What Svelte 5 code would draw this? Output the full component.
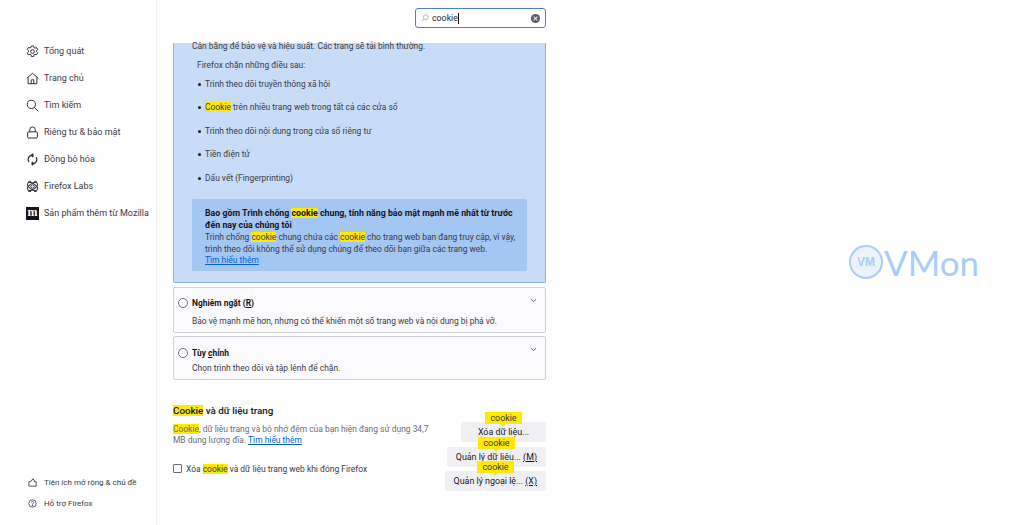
<script>
  const navItems = [
    { label: "Tổng quát", icon: "gear" },
    { label: "Trang chủ", icon: "home" },
    { label: "Tìm kiếm", icon: "search" },
    { label: "Riêng tư & bảo mật", icon: "lock" },
    { label: "Đồng bộ hóa", icon: "sync" },
    { label: "Firefox Labs", icon: "labs" },
    { label: "Sản phẩm thêm từ Mozilla", icon: "moz" }
  ];

  const blocked = [
    [null, "Trình theo dõi truyền thông xã hội"],
    ["Cookie", " trên nhiều trang web trong tất cả các cửa sổ"],
    [null, "Trình theo dõi nội dung trong cửa sổ riêng tư"],
    [null, "Tiền điện tử"],
    [null, "Dấu vết (Fingerprinting)"]
  ];

  const actions = [
    { label: "Xóa dữ liệu...", key: "", tipRight: 24 },
    { label: "Quản lý dữ liệu... ", key: "(M)", tipRight: 31 },
    { label: "Quản lý ngoại lệ... ", key: "(X)", tipRight: 32 }
  ];
</script>

<div class="page">
  <nav class="sidebar">
    <ul class="nav-list">
      {#each navItems as item}
        <li class="nav-item">
          {#if item.icon === "moz"}
            <span class="moz-icon">m</span>
          {:else}
            <svg class="nav-icon" viewBox="0 0 16 16" fill="none" stroke="#2b2a33" stroke-width="1.2">
              {#if item.icon === "gear"}
                <path d="M6.6 1.2h2.8l.4 2 1.3.7 1.9-.7 1.4 2.4-1.5 1.3v1.5l1.5 1.3-1.4 2.4-1.9-.7-1.3.7-.4 2H6.6l-.4-2-1.3-.7-1.9.7-1.4-2.4 1.5-1.3V6.6L1.6 5.3 3 2.9l1.9.7 1.3-.7z" />
                <circle cx="8" cy="8" r="2.3" />
              {:else if item.icon === "home"}
                <path d="M1 7.6 8 1.6l7 6" />
                <path d="M2.6 6.6v7.8h10.8V6.6" />
                <path d="M6.4 14.4V9.6h3.2v4.8" />
              {:else if item.icon === "search"}
                <circle cx="6.6" cy="6.6" r="5" />
                <path d="m10.4 10.4 4.6 4.6" />
              {:else if item.icon === "lock"}
                <rect x="2" y="7.2" width="12" height="7.6" rx="1.4" />
                <path d="M4.6 7.2V4.6a3.4 3.4 0 0 1 6.8 0v2.6" />
              {:else if item.icon === "sync"}
                <path d="M3.6 11A5.2 5.2 0 0 1 6.5 3" stroke-width="1.5" />
                <path d="M12.4 5a5.2 5.2 0 0 1-2.9 8" stroke-width="1.5" />
                <path d="M8.6 1 6 3l2.6 2z" fill="#2b2a33" />
                <path d="M7.4 15 10 13l-2.6-2z" fill="#2b2a33" />
              {:else if item.icon === "labs"}
                <circle cx="8" cy="8" r="2" />
                <ellipse cx="8" cy="8" rx="7" ry="3.6" transform="rotate(35 8 8)" />
                <ellipse cx="8" cy="8" rx="7" ry="3.6" transform="rotate(-35 8 8)" />
                <path d="M3 1.8h3M10 1.8h3M3 14.2h3M10 14.2h3" />
              {/if}
            </svg>
          {/if}
          <span>{item.label}</span>
        </li>
      {/each}
    </ul>

    <ul class="nav-footer">
      <li class="footer-item">
        <svg class="footer-icon" viewBox="0 0 16 16" fill="none" stroke="#2b2a33" stroke-width="1.4">
          <path d="M1.5 6.5h3.5L8.5 1.5l2.5 2.5v2.5h3.5v8h-13z" />
          <path d="M8.5 1.5 11 4" />
        </svg>
        <span>Tiện ích mở rộng & chủ đề</span>
      </li>
      <li class="footer-item">
        <svg class="footer-icon" viewBox="0 0 16 16" fill="none" stroke="#2b2a33" stroke-width="1.3">
          <circle cx="8" cy="8" r="6.6" />
          <path d="M5.9 6.2a2.1 2.1 0 1 1 3.2 1.8c-.7.4-1.1.8-1.1 1.7" />
          <circle cx="8" cy="11.8" r=".6" fill="#2b2a33" />
        </svg>
        <span>Hỗ trợ Firefox</span>
      </li>
    </ul>
  </nav>

  <main class="main">
    <header class="search-row">
      <div class="search-box">
        <svg class="search-glyph" viewBox="0 0 16 16" fill="none" stroke="#8f8f9d" stroke-width="1.3">
          <circle cx="9.6" cy="6.4" r="4.8" />
          <path d="M6 10 1.5 14.5" />
        </svg>
        <span class="search-text">cookie</span><span class="caret"></span>
        <span class="search-clear">
          <svg viewBox="0 0 10 10" stroke="#e8e8ea" stroke-width="1.2"><path d="m3 3 4 4M7 3 3 7" /></svg>
        </span>
      </div>
    </header>

    <section class="card selected">
      <p class="lead">Cân bằng để bảo vệ và hiệu suất. Các trang sẽ tải bình thường.</p>
      <p class="blocks">Firefox chặn những điều sau:</p>
      <ul class="blocked-list">
        {#each blocked as [hit, text]}
          <li>{#if hit}<mark>{hit}</mark>{/if}{text}</li>
        {/each}
      </ul>
      <div class="callout">
        <p class="callout-title">Bao gồm Trình chống <mark>cookie</mark> chung, tính năng bảo mật mạnh mẽ nhất từ trước đến nay của chúng tôi</p>
        <p class="callout-text">Trình chống <mark>cookie</mark> chung chứa các <mark>cookie</mark> cho trang web bạn đang truy cập, vì vậy, trình theo dõi không thể sử dụng chúng để theo dõi bạn giữa các trang web.</p>
        <span class="link">Tìm hiểu thêm</span>
      </div>
    </section>

    <section class="card option strict">
      <div class="option-head">
        <span class="radio"></span>
        <span class="option-title">Nghiêm ngặt (<u>R</u>)</span>
        <svg class="chevron" viewBox="0 0 8 5" fill="none" stroke="#5b5b66" stroke-width="1"><path d="m1 1 3 2.6L7 1" /></svg>
      </div>
      <p class="option-desc">Bảo vệ mạnh mẽ hơn, nhưng có thể khiến một số trang web và nội dung bị phá vỡ.</p>
    </section>

    <section class="card option custom">
      <div class="option-head">
        <span class="radio"></span>
        <span class="option-title">Tùy <u>c</u>hỉnh</span>
        <svg class="chevron" viewBox="0 0 8 5" fill="none" stroke="#5b5b66" stroke-width="1"><path d="m1 1 3 2.6L7 1" /></svg>
      </div>
      <p class="option-desc tight">Chọn trình theo dõi và tập lệnh để chặn.</p>
    </section>

    <section class="cookies">
      <h2><mark>Cookie</mark> và dữ liệu trang</h2>
      <div class="cookies-body">
        <div class="cookies-left">
          <p class="cookies-desc"><mark>Cookie</mark>, dữ liệu trang và bộ nhớ đệm của bạn hiện đang sử dụng 34,7 MB dung lượng đĩa. <span class="link">Tìm hiểu thêm</span></p>
          <label class="check-row">
            <span class="checkbox"></span>
            <span>Xóa <mark>cookie</mark> và dữ liệu trang web khi đóng Firefox</span>
          </label>
        </div>
        <div class="cookies-actions">
          {#each actions as action}
            <div class="action">
              <span class="tip" style="right: {action.tipRight}px">cookie</span>
              {action.label}{#if action.key}<u>{action.key}</u>{/if}
            </div>
          {/each}
        </div>
      </div>
    </section>
  </main>

  <div class="watermark">
    <span class="wm-badge">VM</span>
    <span class="wm-text">VMon</span>
  </div>
</div>

<style>
  :global(body) {
    margin: 0;
    background: #fff;
  }

  .page {
    display: flex;
    width: 1024px;
    height: 525px;
    overflow: hidden;
    font-family: Roboto, "Noto Sans", sans-serif;
    font-size: 8.45px;
    color: #2b2a33;
    position: relative;
  }

  p, ul, h2 {
    margin: 0;
    padding: 0;
  }

  ul {
    list-style: none;
  }

  mark {
    background: #ffe900;
    color: inherit;
  }

  .link {
    color: #0061e0;
    text-decoration: underline;
  }

  /* sidebar */
  .sidebar {
    box-sizing: border-box;
    width: 157px;
    flex-shrink: 0;
    border-right: 1px solid #f0f0f4;
    padding: 41px 0 15px 26px;
    display: flex;
    flex-direction: column;
    justify-content: space-between;
  }

  .nav-list {
    display: flex;
    flex-direction: column;
    gap: 7px;
  }

  .nav-item {
    display: flex;
    align-items: center;
    gap: 5px;
    height: 20px;
    font-size: 9px;
    white-space: nowrap;
    color: #3a3944;
  }

  .nav-icon {
    width: 13px;
    height: 13px;
    flex-shrink: 0;
  }

  .moz-icon {
    width: 13px;
    height: 13px;
    flex-shrink: 0;
    background: #15141a;
    color: #fff;
    font-family: "Liberation Serif", serif;
    font-weight: 700;
    font-size: 12px;
    line-height: 11px;
    text-align: center;
  }

  .nav-footer {
    display: flex;
    flex-direction: column;
    gap: 7px;
    padding-left: 2px;
  }

  .footer-item {
    display: flex;
    align-items: center;
    gap: 7px;
    height: 14px;
    font-size: 8px;
    white-space: nowrap;
    color: #3a3944;
  }

  .footer-icon {
    width: 9px;
    height: 9px;
    flex-shrink: 0;
  }

  /* main column */
  .main {
    width: 373px;
    margin-left: 16px;
    flex-shrink: 0;
  }

  .search-row {
    height: 43px;
    display: flex;
    justify-content: flex-end;
    padding-top: 8px;
    box-sizing: border-box;
  }

  .search-box {
    box-sizing: border-box;
    width: 131px;
    height: 20px;
    border: 1.5px solid #4a7ce8;
    border-radius: 3px;
    display: flex;
    align-items: center;
    padding: 0 5px;
    font-size: 8.8px;
  }

  .search-glyph {
    width: 8px;
    height: 8px;
    margin-right: 3px;
  }

  .caret {
    width: 1px;
    height: 11px;
    background: #15141a;
  }

  .search-clear {
    margin-left: auto;
    width: 9px;
    height: 9px;
    border-radius: 50%;
    background: #5b5b66;
    display: flex;
  }

  .card {
    box-sizing: border-box;
    border: 1px solid #cfcfd8;
    border-radius: 2px;
    background: #fbfbfe;
  }

  .selected {
    height: 240px;
    background: #c9dcf7;
    border: 1px solid #8ab0f5;
    border-top: 0;
    padding: 0 18px;
    border-radius: 0 0 2px 2px;
  }

  .lead {
    height: 7px;
    line-height: 7px;
    color: #3a3944;
  }

  .blocks {
    margin-top: 9px;
    margin-left: 5px;
    line-height: 12px;
    color: #3a3944;
  }

  .blocked-list {
    margin-top: 1.5px;
  }

  .blocked-list li {
    height: 23.5px;
    line-height: 23.5px;
    padding-left: 13px;
    position: relative;
    color: #3a3944;
  }

  .blocked-list li::before {
    content: "";
    position: absolute;
    left: 6px;
    top: 10px;
    width: 3px;
    height: 3px;
    border-radius: 50%;
    background: #15141a;
  }

  .callout {
    box-sizing: border-box;
    margin-top: 9px;
    height: 72px;
    background: #a4c6f3;
    border-radius: 2px;
    padding: 9px 9px 0 13px;
    line-height: 11.6px;
  }

  .callout-title {
    font-size: 8.8px;
    font-weight: 700;
    color: #15141a;
  }

  .callout-text {
    color: #3a3944;
    margin-top: 1px;
  }

  .option {
    padding: 0 9px;
    margin-top: 4px;
  }

  .strict {
    height: 46px;
  }

  .custom {
    margin-top: 3px;
    height: 44px;
  }

  .option-head {
    display: flex;
    align-items: center;
    gap: 4px;
    padding-top: 8px;
    height: 13px;
    font-weight: 700;
    color: #15141a;
    position: relative;
  }

  .custom .option-head {
    padding-top: 9px;
  }

  .radio {
    box-sizing: border-box;
    width: 10px;
    height: 10px;
    border: 1px solid #6b6b76;
    border-radius: 50%;
    background: #fff;
    margin-left: -5px;
    flex-shrink: 0;
  }

  .chevron {
    position: absolute;
    right: -1px;
    top: 10px;
    width: 7px;
    height: 5px;
  }

  .option-desc {
    margin-top: 6px;
    margin-left: 9px;
    line-height: 12px;
    color: #3a3944;
  }

  .option-desc.tight {
    margin-top: 3px;
  }

  .cookies {
    margin-top: 24px;
  }

  h2 {
    font-size: 9.8px;
    font-weight: 500;
    line-height: 14px;
    color: #15141a;
  }

  .cookies-body {
    display: flex;
    justify-content: space-between;
    margin-top: 3px;
  }

  .cookies-left {
    width: 258px;
    padding-top: 3px;
  }

  .cookies-desc {
    line-height: 11.4px;
    color: #6c6b75;
  }

  .check-row {
    display: flex;
    align-items: center;
    gap: 4px;
    margin-top: 17px;
    color: #3a3944;
  }

  .checkbox {
    box-sizing: border-box;
    width: 9px;
    height: 9px;
    border: 1px solid #6b6b76;
    border-radius: 1px;
  }

  .cookies-actions {
    display: flex;
    flex-direction: column;
    align-items: flex-end;
    gap: 4.5px;
    padding-top: 1px;
  }

  .action {
    box-sizing: border-box;
    min-width: 85px;
    height: 20px;
    line-height: 20px;
    padding: 0 9px;
    border-radius: 2px;
    background: #f0f0f4;
    color: #15141a;
    font-size: 8.9px;
    text-align: center;
    white-space: nowrap;
    position: relative;
  }

  .tip {
    position: absolute;
    top: -10px;
    box-sizing: border-box;
    width: 37px;
    height: 12px;
    line-height: 12px;
    text-align: center;
    background: #ffe900;
    color: #3a3944;
  }

  .tip::after {
    content: "";
    position: absolute;
    left: 15px;
    bottom: -3px;
    border: 3px solid transparent;
    border-bottom: 0;
    border-top-color: #ffe900;
  }

  /* watermark */
  .watermark {
    position: absolute;
    left: 849px;
    top: 245px;
    display: flex;
    align-items: center;
    gap: 1px;
    color: #a8cdfa;
  }

  .wm-badge {
    box-sizing: border-box;
    width: 34px;
    height: 34px;
    border: 2px solid #a8cdfa;
    border-radius: 50%;
    background: #edf3fb;
    font-family: "Liberation Sans", sans-serif;
    font-weight: 700;
    font-size: 12px;
    line-height: 30px;
    text-align: center;
  }

  .wm-text {
    font-family: "Lato", sans-serif;
    font-size: 35px;
    line-height: 34px;
  }
</style>
